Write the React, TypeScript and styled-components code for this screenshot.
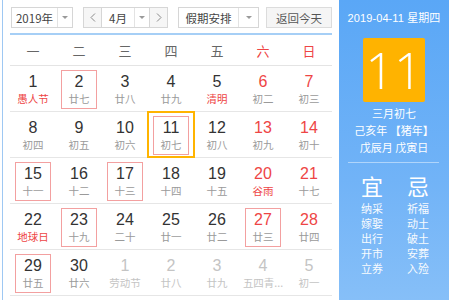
import React from 'react'
import styled, { createGlobalStyle, css } from 'styled-components'

const GlobalStyle = createGlobalStyle`
  html, body {
    margin: 0;
    padding: 0;
    background: #fff;
  }
  body {
    font-family: 'Liberation Sans', 'Noto Sans CJK SC', sans-serif;
    color: #333;
  }
`

const RED = '#ee4545'
const PINK = '#f3a0a0'

type Day = {
  n: number
  sub: string
  fest?: boolean
  other?: boolean
  marked?: boolean
  today?: boolean
}

const weeks: Day[][] = [
  [
    { n: 1, sub: '愚人节', fest: true },
    { n: 2, sub: '廿七', marked: true },
    { n: 3, sub: '廿八' },
    { n: 4, sub: '廿九' },
    { n: 5, sub: '清明', fest: true },
    { n: 6, sub: '初二' },
    { n: 7, sub: '初三' },
  ],
  [
    { n: 8, sub: '初四' },
    { n: 9, sub: '初五' },
    { n: 10, sub: '初六' },
    { n: 11, sub: '初七', today: true, marked: true },
    { n: 12, sub: '初八' },
    { n: 13, sub: '初九' },
    { n: 14, sub: '初十' },
  ],
  [
    { n: 15, sub: '十一', marked: true },
    { n: 16, sub: '十二' },
    { n: 17, sub: '十三', marked: true },
    { n: 18, sub: '十四' },
    { n: 19, sub: '十五' },
    { n: 20, sub: '谷雨', fest: true },
    { n: 21, sub: '十七' },
  ],
  [
    { n: 22, sub: '地球日', fest: true },
    { n: 23, sub: '十九', marked: true },
    { n: 24, sub: '二十' },
    { n: 25, sub: '廿一' },
    { n: 26, sub: '廿二' },
    { n: 27, sub: '廿三', marked: true },
    { n: 28, sub: '廿四' },
  ],
  [
    { n: 29, sub: '廿五', marked: true },
    { n: 30, sub: '廿六' },
    { n: 1, sub: '劳动节', other: true },
    { n: 2, sub: '廿八', other: true },
    { n: 3, sub: '廿九', other: true },
    { n: 4, sub: '五四青...', other: true },
    { n: 5, sub: '初一', other: true },
  ],
]

const weekdays = ['一', '二', '三', '四', '五', '六', '日']
const yi = ['纳采', '嫁娶', '出行', '开市', '立券']
const ji = ['祈福', '动土', '破土', '安葬', '入殓']

const Widget = styled.div`
  display: flex;
  width: 448px;
  height: 300px;
  margin-left: 2px;
  border-left: 1px solid #9ec8f3;
  overflow: hidden;
`

const Main = styled.div`
  width: 322px;
  padding: 0 7px;
`

const Toolbar = styled.div`
  display: flex;
  align-items: center;
  padding: 7px 0 0 1px;
  height: 21px;
  font-size: 12px;
`

const Group = styled.div<{ $gap: number }>`
  display: flex;
  height: 21px;
  margin-right: ${(p) => p.$gap}px;
`

const Select = styled.div`
  display: flex;
  height: 19px;
  border: 1px solid #d6d6d6;
  background: #fff;
`

const SelectText = styled.div<{ $w: number }>`
  width: ${(p) => p.$w}px;
  display: flex;
  align-items: center;
  justify-content: center;
  color: #444;
  font-family: 'Noto Sans CJK SC', sans-serif;
  font-size: 11.5px;
  border-right: 1px solid #e3e3e3;
`

const ArrowBox = styled.div<{ $w: number }>`
  width: ${(p) => p.$w}px;
  display: flex;
  align-items: center;
  justify-content: center;
`

const Caret = styled.span`
  width: 0;
  height: 0;
  border-left: 3px solid transparent;
  border-right: 3px solid transparent;
  border-top: 3px solid #9a9a9a;
`

const NavButton = styled.div<{ $side: 'left' | 'right' }>`
  width: 17px;
  height: 19px;
  display: flex;
  align-items: center;
  justify-content: center;
  background: #f6f6f6;
  border: 1px solid #d6d6d6;
  ${(p) =>
    p.$side === 'left'
      ? css`
          border-right: none;
        `
      : css`
          border-left: none;
        `}
`

const TodayButton = styled.div`
  width: 67px;
  height: 19px;
  display: flex;
  align-items: center;
  justify-content: center;
  background: #f5f5f5;
  border: 1px solid #dcdcdc;
  color: #555;
  font-family: 'Noto Sans CJK SC', sans-serif;
  font-size: 11.5px;
`

const BlueRule = styled.div`
  height: 2px;
  margin-top: 5px;
  background: #a6cff6;
`

const WeekHeader = styled.div`
  display: grid;
  grid-template-columns: repeat(7, 46px);
  height: 30px;
  border-bottom: 1px solid #e4e4e4;
`

const WeekName = styled.div<{ $weekend: boolean }>`
  display: flex;
  align-items: center;
  justify-content: center;
  padding-top: 1px;
  font-family: 'Noto Sans CJK SC', sans-serif;
  font-size: 13px;
  color: ${(p) => (p.$weekend ? RED : '#666')};
`

const WeekRow = styled.div`
  display: grid;
  grid-template-columns: repeat(7, 46px);
  height: 45px;
  border-bottom: 1px solid #e6e6e6;
`

const Cell = styled.div<{ $today: boolean }>`
  display: flex;
  justify-content: center;
  padding-top: 4px;
  ${(p) =>
    p.$today &&
    css`
      outline: 2px solid #ffb400;
      outline-offset: -1px;
    `}
`

const DayBox = styled.div<{ $marked: boolean }>`
  width: 36px;
  height: 39px;
  border: 1px solid ${(p) => (p.$marked ? PINK : 'transparent')};
  display: flex;
  flex-direction: column;
  align-items: center;
  padding-top: 2px;
  box-sizing: border-box;
`

const DayNum = styled.div<{ $color: string }>`
  font-size: 16px;
  line-height: 18px;
  color: ${(p) => p.$color};
`

const Lunar = styled.div<{ $color: string }>`
  font-family: 'Noto Sans CJK SC', sans-serif;
  font-size: 10.5px;
  line-height: 15px;
  white-space: nowrap;
  color: ${(p) => p.$color};
`

const Panel = styled.div`
  width: 110px;
  height: 300px;
  background: linear-gradient(180deg, #5aa7f6 0%, #71b3f7 60%, #86bff8 100%);
  color: #fff;
  display: flex;
  flex-direction: column;
  align-items: center;
  padding-top: 11px;
  box-sizing: border-box;
`

const DateLine = styled.div`
  font-size: 11px;
  line-height: 14px;
  white-space: nowrap;
  letter-spacing: 0.1px;
`

const BigDay = styled.div`
  width: 62px;
  height: 64px;
  margin-top: 13px;
  background: #ffb300;
  border-radius: 2px;
  display: flex;
  align-items: center;
  justify-content: center;
  font-size: 50px;
  font-weight: 300;
  font-family: 'Open Sans', 'Liberation Sans', sans-serif;
  line-height: 1;
`

const LunarInfo = styled.div`
  margin-top: 3px;
  font-family: 'Noto Sans CJK SC', sans-serif;
  font-size: 11px;
  line-height: 17px;
  text-align: center;
`

const PanelRule = styled.div`
  width: 91px;
  height: 1px;
  margin: 6px 1px 0 0;
  background: rgba(255, 255, 255, 0.45);
`

const Advice = styled.div`
  display: grid;
  grid-template-columns: 46px 46px;
  margin: 9px 0 0 2px;
  font-family: 'Noto Sans CJK SC', sans-serif;
`

const AdviceCol = styled.div`
  display: flex;
  flex-direction: column;
  align-items: center;
`

const AdviceTitle = styled.div`
  font-size: 22px;
  line-height: 26px;
  margin-bottom: 3px;
`

const AdviceItem = styled.div`
  font-size: 11px;
  line-height: 15px;
  opacity: 0.95;
`

const Chevron = ({ dir }: { dir: 'left' | 'right' }) => (
  <svg width='6' height='9' viewBox='0 0 6 9'>
    <polyline
      points={dir === 'left' ? '5,0.5 1,4.5 5,8.5' : '1,0.5 5,4.5 1,8.5'}
      fill='none'
      stroke='#8a8a8a'
      strokeWidth='1'
    />
  </svg>
)

const numColor = (d: Day, col: number) => {
  if (d.other) return '#c4c4c4'
  if (col >= 5) return RED
  return '#333'
}

const lunarColor = (d: Day) => {
  if (d.other) return '#c4c4c4'
  if (d.fest) return RED
  return '#9a9a9a'
}

const App = () => {
  return (
    <>
      <GlobalStyle />
      <Widget>
        <Main>
          <Toolbar>
            <Group $gap={10}>
              <Select>
                <SelectText $w={45}>2019年</SelectText>
                <ArrowBox $w={14}>
                  <Caret />
                </ArrowBox>
              </Select>
            </Group>
            <Group $gap={10}>
              <NavButton $side='left'>
                <Chevron dir='left' />
              </NavButton>
              <Select>
                <SelectText $w={32}>4月</SelectText>
                <ArrowBox $w={14}>
                  <Caret />
                </ArrowBox>
              </Select>
              <NavButton $side='right'>
                <Chevron dir='right' />
              </NavButton>
            </Group>
            <Group $gap={7}>
              <Select>
                <SelectText $w={59}>假期安排</SelectText>
                <ArrowBox $w={19}>
                  <Caret />
                </ArrowBox>
              </Select>
            </Group>
            <TodayButton>返回今天</TodayButton>
          </Toolbar>
          <BlueRule />
          <WeekHeader>
            {weekdays.map((w, i) => (
              <WeekName key={w} $weekend={i >= 5}>
                {w}
              </WeekName>
            ))}
          </WeekHeader>
          {weeks.map((week, r) => (
            <WeekRow key={r}>
              {week.map((d, c) => (
                <Cell key={c} $today={!!d.today}>
                  <DayBox $marked={!!d.marked}>
                    <DayNum $color={numColor(d, c)}>{d.n}</DayNum>
                    <Lunar $color={lunarColor(d)}>{d.sub}</Lunar>
                  </DayBox>
                </Cell>
              ))}
            </WeekRow>
          ))}
        </Main>
        <Panel>
          <DateLine>2019-04-11 星期四</DateLine>
          <BigDay>11</BigDay>
          <LunarInfo>
            <div>三月初七</div>
            <div>己亥年 【猪年】</div>
            <div>戊辰月 戊寅日</div>
          </LunarInfo>
          <PanelRule />
          <Advice>
            <AdviceCol>
              <AdviceTitle>宜</AdviceTitle>
              {yi.map((t) => (
                <AdviceItem key={t}>{t}</AdviceItem>
              ))}
            </AdviceCol>
            <AdviceCol>
              <AdviceTitle>忌</AdviceTitle>
              {ji.map((t) => (
                <AdviceItem key={t}>{t}</AdviceItem>
              ))}
            </AdviceCol>
          </Advice>
        </Panel>
      </Widget>
    </>
  )
}

export default App
